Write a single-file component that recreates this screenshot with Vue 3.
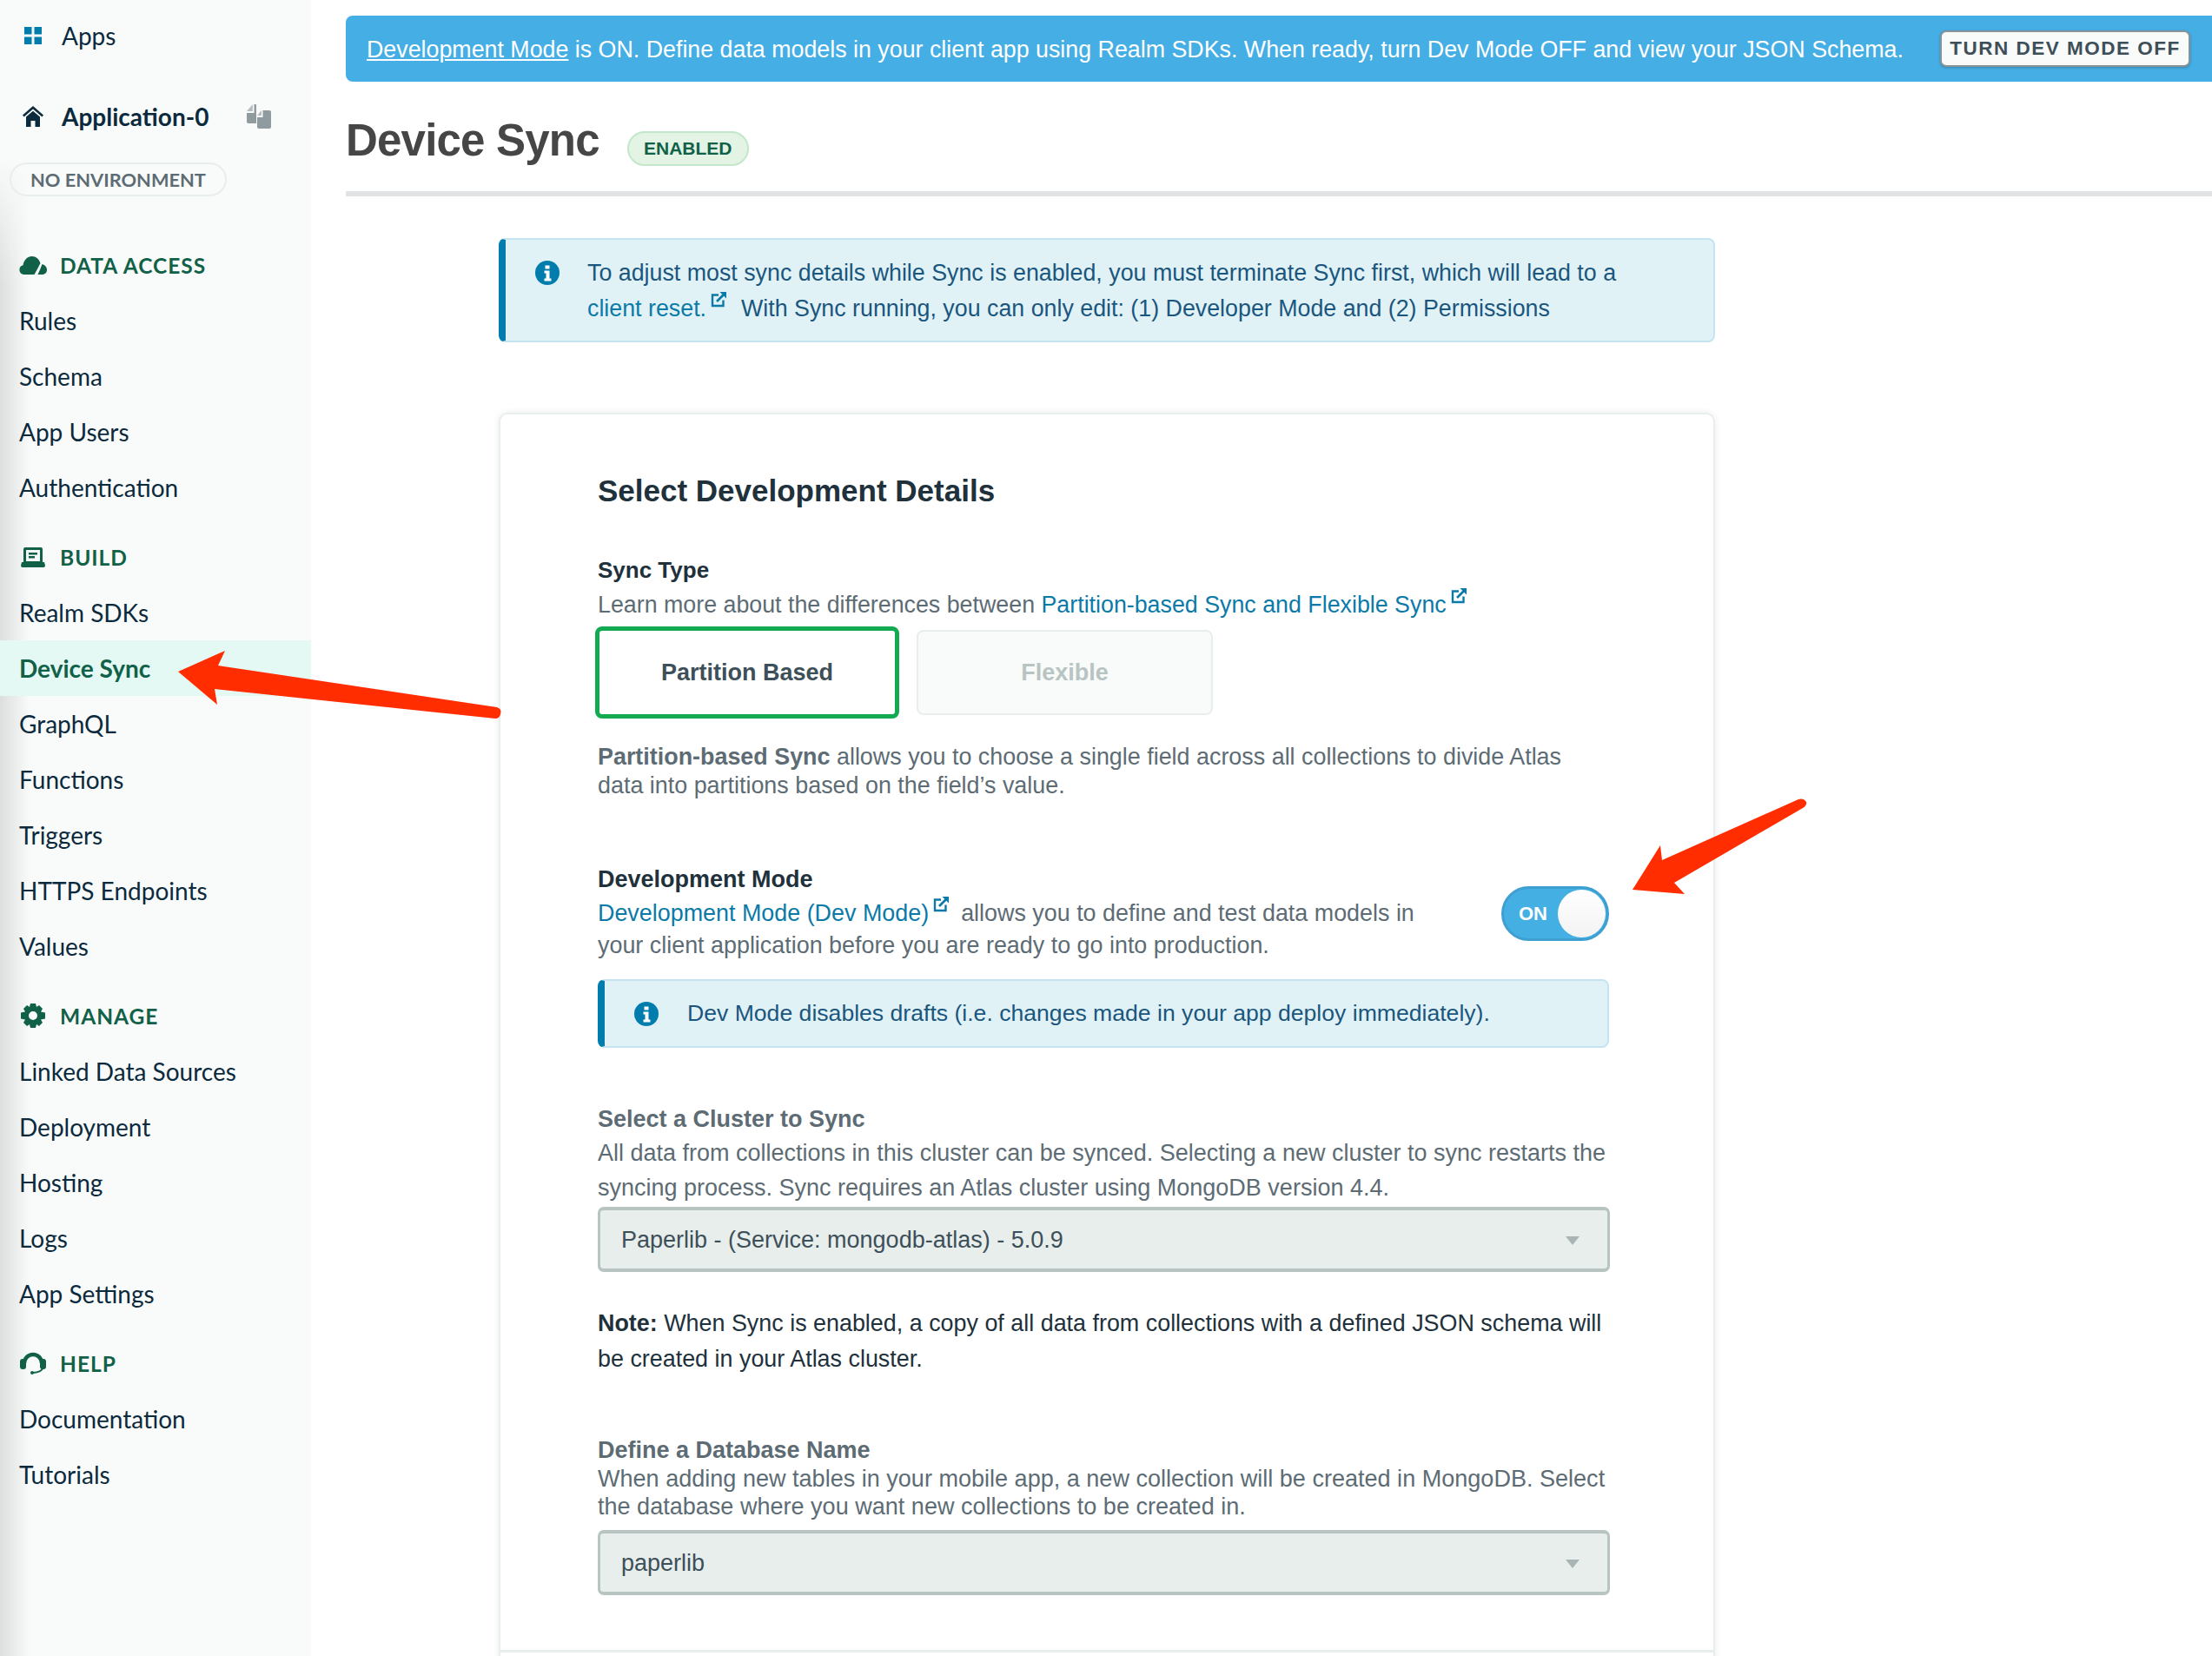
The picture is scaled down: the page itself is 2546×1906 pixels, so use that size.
<template>
  <div class="page">
    <aside class="sidebar">
      <div class="apps">
        <svg class="side-icon" width="20" height="20" viewBox="0 0 20 20">
          <path fill="#007cad" d="M0 0h8.500v8.500H0zM11.500 0H20v8.500h-8.500zM0 11.500h8.500V20H0zM11.500 11.500H20V20h-8.500z" />
        </svg>
        <span>Apps</span>
      </div>
      <div class="app-name">
        <svg class="side-icon" width="24" height="24" viewBox="0 0 24 24">
          <path fill="#0b2a3d" d="M12 0 24 10.500l-1.600 1.900L12 3.400 1.600 12.400 0 10.500zM4 12.600l8-6.900 8 6.900V24h-5.500v-7h-5v7H4z" />
        </svg>
        <span>Application-0</span>
        <svg class="copy-icon" width="28" height="28" viewBox="0 0 28 28">
          <path fill="#8f9b9f" d="M8.500 0H10a1 1 0 0 1 1 1v21H2a2 2 0 0 1-2-2V10h8.500z" />
          <path fill="#b4bdbf" d="M0 8 6.800 0v8z" />
          <path fill="#8f9b9f" d="M18.500 7H26a2 2 0 0 1 2 2v17a2 2 0 0 1-2 2H14a2 2 0 0 1-2-2V15h6.500z" />
          <path fill="#b4bdbf" d="M12 13 17 7v6z" />
        </svg>
      </div>
      <div class="env-pill">NO ENVIRONMENT</div>

      <section v-for="group in navGroups" :key="group.title" class="nav-group">
        <div class="nav-head">
          <span class="head-icon" v-html="group.icon"></span>
          <span>{{ group.title }}</span>
        </div>
        <div
          v-for="item in group.items"
          :key="item"
          class="nav-item"
          :class="{ active: item === 'Device Sync' }"
        >{{ item }}</div>
      </section>
    </aside>

    <main class="main">
      <div class="banner">
        <p><a>Development Mode</a> is ON. Define data models in your client app using Realm SDKs. When ready, turn Dev Mode OFF and view your JSON Schema.</p>
        <button class="banner-btn">TURN DEV MODE OFF</button>
      </div>

      <header class="title-row">
        <h1>Device Sync</h1>
        <span class="badge">ENABLED</span>
      </header>

      <div class="content">
        <div class="info top-info">
          <svg class="info-icon" width="28" height="28" viewBox="0 0 28 28">
            <circle cx="14" cy="14" r="14" fill="#007cad" />
            <path fill="#fff" d="M11.500 5.500h5v4h-5zM10.500 11.500h6v9h2v3h-8v-3h2v-6h-2z" />
          </svg>
          <p>
            To adjust most sync details while Sync is enabled, you must terminate Sync first, which will lead to a<br />
            <a>client reset.<svg class="ext" width="18" height="18" viewBox="0 0 18 18"><path fill="none" stroke="currentColor" stroke-width="2.400" d="M9 3.500H2v12.500h12.500V9.500" /><path fill="none" stroke="currentColor" stroke-width="2.600" d="M7 11l8-8" /><path fill="currentColor" d="M10.500 0H18v7.500z" /></svg></a>
            <span class="after-ext wide">With Sync running, you can only edit: (1) Developer Mode and (2) Permissions</span>
          </p>
        </div>

        <div class="card">
          <h2>Select Development Details</h2>

          <h3 class="sync-head">Sync Type</h3>
          <p class="learn">
            Learn more about the differences between
            <a>Partition-based Sync and Flexible Sync<svg class="ext" width="18" height="18" viewBox="0 0 18 18"><path fill="none" stroke="currentColor" stroke-width="2.400" d="M9 3.500H2v12.500h12.500V9.500" /><path fill="none" stroke="currentColor" stroke-width="2.600" d="M7 11l8-8" /><path fill="currentColor" d="M10.500 0H18v7.500z" /></svg></a>
          </p>
          <div class="type-row">
            <div class="type-btn selected">Partition Based</div>
            <div class="type-btn disabled">Flexible</div>
          </div>
          <p class="type-desc">
            <b>Partition-based Sync</b> allows you to choose a single field across all collections to divide Atlas<br />
            data into partitions based on the field’s value.
          </p>

          <div class="dev-row">
            <div>
              <h3>Development Mode</h3>
              <p class="dev-desc">
                <a>Development Mode (Dev Mode)<svg class="ext" width="18" height="18" viewBox="0 0 18 18"><path fill="none" stroke="currentColor" stroke-width="2.400" d="M9 3.500H2v12.500h12.500V9.500" /><path fill="none" stroke="currentColor" stroke-width="2.600" d="M7 11l8-8" /><path fill="currentColor" d="M10.500 0H18v7.500z" /></svg></a>
                <span class="after-ext">allows you to define and test data models in</span><br />
                your client application before you are ready to go into production.
              </p>
            </div>
            <div class="toggle">
              <span>ON</span>
              <i></i>
            </div>
          </div>

          <div class="info dev-info">
            <svg class="info-icon" width="28" height="28" viewBox="0 0 28 28">
              <circle cx="14" cy="14" r="14" fill="#007cad" />
              <path fill="#fff" d="M11.500 5.500h5v4h-5zM10.500 11.500h6v9h2v3h-8v-3h2v-6h-2z" />
            </svg>
            <p>Dev Mode disables drafts (i.e. changes made in your app deploy immediately).</p>
          </div>

          <h3 class="muted-head cluster-head">Select a Cluster to Sync</h3>
          <p class="cluster-desc">
            All data from collections in this cluster can be synced. Selecting a new cluster to sync restarts the<br />
            syncing process. Sync requires an Atlas cluster using MongoDB version 4.4.
          </p>
          <div class="select">
            <span>Paperlib - (Service: mongodb-atlas) - 5.0.9</span>
            <i class="caret"></i>
          </div>

          <p class="note">
            <b>Note:</b> When Sync is enabled, a copy of all data from collections with a defined JSON schema will<br />
            be created in your Atlas cluster.
          </p>

          <h3 class="muted-head db-head">Define a Database Name</h3>
          <p class="db-desc">
            When adding new tables in your mobile app, a new collection will be created in MongoDB. Select<br />
            the database where you want new collections to be created in.
          </p>
          <div class="select db-select">
            <span>paperlib</span>
            <i class="caret"></i>
          </div>

          <div class="card-foot"></div>
        </div>
      </div>
    </main>

    <!-- annotation arrows drawn over the screenshot -->
    <svg class="arrows" width="2546" height="1906" viewBox="0 0 2546 1906">
      <path fill="#ff2d00" d="M205 773 259 749 251 766 572 814Q578 816 576 822 575 827 570 827L247 793 250 811z" />
      <path fill="#ff2d00" d="M1879 1024 1911 973 1913 990 2070 920Q2076 918 2079 923 2080 927 2075 930L1927 1016 1939 1029z" />
    </svg>
  </div>
</template>

<script setup>
const navGroups = [
  {
    title: 'DATA ACCESS',
    icon: '<svg width="32" height="21" viewBox="0 0 32 21"><path fill="#116149" d="M5.500 21a5.500 5.500 0 0 1-1-10.800C5.500 4 10 0 14.500 0c5 0 8.500 3 10 8-2 3.500-4 8-7 13z"/><path fill="#116149" d="M26.500 9c3.500 1 5.500 3.500 5.500 6.500 0 3-2 5.500-6 5.500h-4.500c2-4 3.500-8 5-12z"/></svg>',
    items: ['Rules', 'Schema', 'App Users', 'Authentication'],
  },
  {
    title: 'BUILD',
    icon: '<svg width="28" height="23" viewBox="0 0 28 23"><path fill="#116149" fill-rule="evenodd" d="M3 2a2 2 0 0 1 2-2h18a2 2 0 0 1 2 2v15h2l1 4a2 2 0 0 1-2 2H2a2 2 0 0 1-2-2l1-4h2zM6 3v13h16V3zM9 6h10v2.500H9zM9 10h7v2.500H9z"/></svg>',
    items: ['Realm SDKs', 'Device Sync', 'GraphQL', 'Functions', 'Triggers', 'HTTPS Endpoints', 'Values'],
  },
  {
    title: 'MANAGE',
    icon: '<svg width="28" height="28" viewBox="0 0 28 28"><path fill="#116149" fill-rule="evenodd" d="M11 0h6l1 4 3-2 4 4-2 3.500 5 1v7l-5 1 2 3.500-4 4-3-2-1 4h-6l-1-4-3 2-4-4 2-3.500-5-1v-7l5-1L3 6l4-4 3 2zM14 9a5 5 0 1 0 0 10 5 5 0 0 0 0-10z"/></svg>',
    items: ['Linked Data Sources', 'Deployment', 'Hosting', 'Logs', 'App Settings'],
  },
  {
    title: 'HELP',
    icon: '<svg width="30" height="26" viewBox="0 0 30 26"><path fill="none" stroke="#116149" stroke-width="4.500" d="M5 13a10 10 0 0 1 20 0"/><rect x="0" y="8" width="7" height="12" rx="3" fill="#116149"/><rect x="23" y="8" width="7" height="12" rx="3" fill="#116149"/><path fill="none" stroke="#116149" stroke-width="2" d="M26 19q-1 4-11 5"/><circle cx="14" cy="24" r="2" fill="#116149"/></svg>',
    items: ['Documentation', 'Tutorials'],
  },
]
</script>

<style>
html,
body {
  margin: 0;
  background: #fff;
}
</style>

<style scoped>
.page {
  position: relative;
  display: flex;
  width: 2546px;
  height: 1906px;
  overflow: hidden;
  background: #fff;
  font-family: "Liberation Sans", Arial, sans-serif;
  color: #21313c;
}

p,
h1,
h2,
h3 {
  margin: 0;
}

a {
  color: #0b7aa8;
}

/* sidebar */
.sidebar {
  position: relative;
  flex: 0 0 358px;
  box-sizing: border-box;
  padding-top: 9px;
  background: #f9fbfa;
  font-family: Lato, "Open Sans", sans-serif;
  font-size: 28px;
  color: #0b2a3d;
}

.sidebar::before {
  content: "";
  position: absolute;
  top: 0;
  left: 0;
  bottom: 0;
  width: 34px;
  background: linear-gradient(to right, #dcdedd, rgba(249, 251, 250, 0));
  -webkit-mask-image: linear-gradient(to bottom, transparent 180px, #000 330px);
  mask-image: linear-gradient(to bottom, transparent 180px, #000 330px);
}

.sidebar > * {
  position: relative;
}

.apps,
.app-name {
  display: flex;
  align-items: center;
  height: 64px;
  padding-left: 28px;
}

.side-icon {
  flex: none;
}

.apps span {
  margin-left: 23px;
}

.app-name {
  margin-top: 29px;
  font-weight: 700;
  padding-left: 26px;
}

.app-name span {
  margin-left: 21px;
  font-size: 28px;
}

.copy-icon {
  margin-left: 44px;
}

.env-pill {
  box-sizing: border-box;
  width: 250px;
  height: 39px;
  margin: 21px 0 0 11px;
  border: 2px solid #e7eeec;
  border-radius: 20px;
  font-size: 21.800px;
  font-weight: 700;
  line-height: 35px;
  text-align: center;
  color: #5d6c74;
}

.nav-group {
  margin-top: 16px;
}

.nav-group:first-of-type {
  margin-top: 47px;
}

.nav-head {
  display: flex;
  align-items: center;
  height: 64px;
  padding-left: 24px;
  font-size: 24.500px;
  font-weight: 700;
  letter-spacing: 1px;
  color: #116149;
}

.head-icon {
  display: flex;
  justify-content: center;
  flex: 0 0 32px;
  margin: 0 15px 0 -2px;
}

.nav-item {
  display: flex;
  align-items: center;
  height: 64px;
  padding-left: 22px;
}

.nav-item.active {
  background: #e4f9f4;
  font-weight: 700;
  color: #116149;
}

/* main column */
.main {
  flex: 1;
  min-width: 0;
  padding: 18px 0 0 40px;
}

.banner {
  display: flex;
  align-items: center;
  justify-content: space-between;
  box-sizing: border-box;
  height: 76px;
  padding: 0 25px 0 24px;
  background: #44aee5;
  border-radius: 8px 0 0 8px;
  font-size: 26.800px;
  color: #fff;
}

.banner p {
  padding-top: 2px;
  white-space: nowrap;
}

.banner a {
  color: #fff;
  text-decoration: underline;
}

.banner-btn {
  box-sizing: border-box;
  width: 288px;
  height: 42px;
  padding: 0;
  border: 2px solid #889397;
  border-radius: 7px;
  background: #f9fbfa;
  box-shadow: 0 1px 3px rgba(0, 0, 0, 0.25);
  font-family: "Liberation Sans", Arial, sans-serif;
  font-size: 22.500px;
  font-weight: 700;
  letter-spacing: 1.500px;
  color: #3d4f58;
}

.title-row {
  display: flex;
  align-items: center;
  box-sizing: border-box;
  height: 132px;
  padding-top: 8px;
  border-bottom: 6px solid #e1e3e5;
}

h1 {
  font-size: 51px;
  font-weight: 700;
  letter-spacing: -0.800px;
  color: #464646;
}

.badge {
  box-sizing: border-box;
  height: 40px;
  width: 140px;
  margin: 20px 0 0 32px;
  border: 2px solid #c3e7ca;
  border-radius: 20px;
  background: #e4f4e4;
  font-size: 21px;
  font-weight: 700;
  line-height: 36px;
  text-align: center;
  color: #116149;
}

.content {
  width: 1400px;
  margin: 48px 0 0 176px;
}

.info {
  display: flex;
  box-sizing: border-box;
  border: 2px solid #c5e4f2;
  border-left: 8px solid #007cad;
  border-radius: 8px;
  background: #e1f2f6;
  color: #1a567e;
}

.top-info {
  height: 120px;
  padding: 18px 0 0 34px;
  font-size: 26.800px;
  line-height: 41px;
}

.top-info .info-icon {
  margin: 6px 0 0 0;
}

.info-icon {
  flex: none;
}

.top-info p {
  margin-left: 32px;
  white-space: nowrap;
}

.ext {
  margin-left: 5px;
  vertical-align: 10px;
  color: #0b7aa8;
}

.after-ext {
  margin-left: 14px;
}

.after-ext.wide {
  margin-left: 17px;
}

/* form card */
.card {
  box-sizing: border-box;
  margin-top: 81px;
  padding: 66px 119px 0 112px;
  height: 1500px;
  border: 2px solid #e7eeec;
  border-radius: 10px;
  box-shadow: 0 0 8px rgba(6, 22, 33, 0.08);
  font-size: 26.900px;
  color: #5d6c74;
  white-space: nowrap;
}

h2 {
  font-size: 35px;
  font-weight: 700;
  line-height: 44px;
  color: #21313c;
}

h3 {
  font-size: 27px;
  font-weight: 700;
  line-height: 36px;
  color: #21313c;
}

.sync-head {
  margin-top: 51px;
  font-size: 26px;
}

.learn {
  margin-top: 3px;
  font-size: 26.800px;
  line-height: 36px;
}

.type-row {
  display: flex;
  align-items: center;
  gap: 20px;
  margin: 7px 0 0 -3px;
}

.type-btn {
  display: flex;
  align-items: center;
  justify-content: center;
  box-sizing: border-box;
  border-radius: 8px;
  font-size: 27px;
  font-weight: 700;
}

.type-btn.selected {
  width: 350px;
  height: 106px;
  border: 5px solid #13aa52;
  color: #3d4f58;
}

.type-btn.disabled {
  width: 341px;
  height: 98px;
  border: 2px solid #e7eeec;
  background: #f9fbfa;
  color: #b8c4c2;
}

.type-desc {
  margin-top: 28px;
  line-height: 33px;
}

.type-desc b {
  color: #5d6c74;
}

.dev-row {
  display: flex;
  justify-content: space-between;
  margin-top: 73px;
}

.dev-desc {
  margin-top: 2px;
  line-height: 37px;
}

.toggle {
  position: relative;
  box-sizing: border-box;
  width: 124px;
  height: 63px;
  margin: 26px 1px 0 0;
  border: 3px solid #3f9fd1;
  border-radius: 32px;
  background: #43afe3;
  font-size: 22px;
  font-weight: 700;
  line-height: 57px;
  color: #fff;
}

.toggle span {
  margin-left: 17px;
}

.toggle i {
  position: absolute;
  top: 1px;
  right: 1px;
  width: 55px;
  height: 55px;
  border-radius: 50%;
  background: linear-gradient(#fff, #f3f3f3);
}

.dev-info {
  align-items: center;
  height: 79px;
  margin: 20px 1px 0 0;
  padding-left: 34px;
  border-left-width: 8px;
  font-size: 26.600px;
}

.dev-info p {
  margin-left: 33px;
}

.muted-head {
  color: #5d6c74;
}

.cluster-head {
  margin-top: 64px;
}

.cluster-desc {
  margin-top: 1px;
  font-size: 27px;
  line-height: 40px;
}

.select {
  display: flex;
  align-items: center;
  justify-content: space-between;
  box-sizing: border-box;
  height: 75px;
  margin-top: 2px;
  padding: 2px 32px 0 24px;
  border: 3px solid #b8c4c2;
  border-top-width: 4px;
  border-bottom-width: 4px;
  border-radius: 7px;
  background: #e7eeec;
  font-size: 27px;
  color: #3d4f58;
}

.caret {
  width: 0;
  height: 0;
  border-left: 8px solid transparent;
  border-right: 8px solid transparent;
  border-top: 10px solid #a9b5b4;
}

.note {
  margin-top: 39px;
  line-height: 41px;
  color: #21313c;
}

.db-head {
  margin-top: 66px;
}

.db-desc {
  margin-top: -1px;
  font-size: 27.050px;
  line-height: 32px;
}

.db-select {
  margin-top: 11px;
}

.card-foot {
  height: 3px;
  margin: 63px -119px 0 -112px;
  background: #e7eeec;
}

.arrows {
  position: absolute;
  top: 0;
  left: 0;
  pointer-events: none;
}
</style>
